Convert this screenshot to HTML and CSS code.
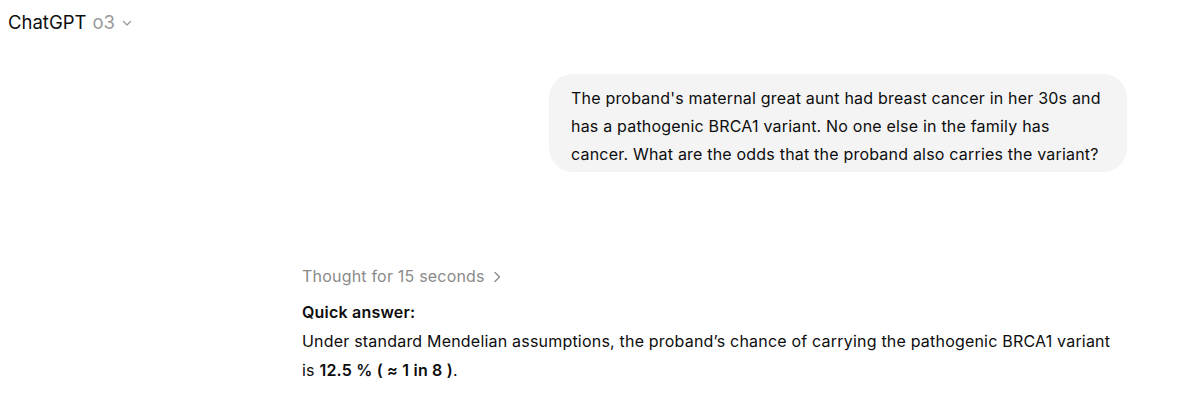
FILE: index.html
```html
<!DOCTYPE html>
<html>
<head>
<meta charset="utf-8">
<link rel="stylesheet" href="styles.css">
</head>
<body>
<header class="topbar">
  <span class="brand">ChatGPT</span>
  <span class="model">o3</span>
  <svg class="chev-down" width="12" height="12" viewBox="0 0 12 12"><path d="M2.5 4.5 L6 8 L9.5 4.5" fill="none" stroke="#9a9a9a" stroke-width="1.3" stroke-linecap="round" stroke-linejoin="round"/></svg>
</header>
<main class="thread">
  <div class="user-row">
    <div class="bubble">The proband's maternal great aunt had breast cancer in her 30s and has a pathogenic BRCA1 variant. No one else in the family has cancer. What are the odds that the proband also carries the variant?</div>
  </div>
  <div class="assistant">
    <div class="thought">Thought for 15 seconds <svg class="chev-right" width="12" height="14" viewBox="0 0 12 14"><path d="M4 2.5 L8.5 7 L4 11.5" fill="none" stroke="#8a8a8a" stroke-width="1.3" stroke-linecap="round" stroke-linejoin="round"/></svg></div>
    <p class="heading">Quick answer:</p>
    <p class="answer">Under standard Mendelian assumptions, the proband’s chance of carrying the pathogenic BRCA1 variant is <strong>12.5 % ( ≈ 1 in 8 )</strong>.</p>
  </div>
</main>
</body>
</html>
```
FILE: styles.css
```css
html, body {
  margin: 0;
  padding: 0;
  background: #ffffff;
}
body {
  font-family: Inter, "Noto Sans", "Liberation Sans", sans-serif;
  color: #0d0d0d;
  font-size: 16px;
  width: 1200px;
  height: 403px;
  overflow: hidden;
}
.topbar {
  display: flex;
  align-items: center;
  gap: 6px;
  height: 44px;
  padding-left: 8px;
  font-size: 18.5px;
}
.brand { color: #0d0d0d; }
.model { color: #9a9a9a; }
.chev-down { margin-top: 2px; }
.thread {
  width: 825px;
  margin-left: 302px;
  padding-top: 30px;
}
.user-row {
  display: flex;
  justify-content: flex-end;
}
.bubble {
  width: 536px;
  background: #f4f4f4;
  border-radius: 24px;
  padding: 10px 20px 4px 22px;
  line-height: 28px;
  letter-spacing: 0.2px;
}
.assistant {
  width: 820px;
  margin-top: 90px;
  line-height: 29px;
  letter-spacing: 0.2px;
}
.thought {
  color: #8a8a8a;
  display: flex;
  align-items: center;
  gap: 6px;
}
.heading {
  margin: 7px 0 0;
  font-weight: 600;
}
.answer {
  margin: 0;
}
.answer strong { font-weight: 600; }
```
